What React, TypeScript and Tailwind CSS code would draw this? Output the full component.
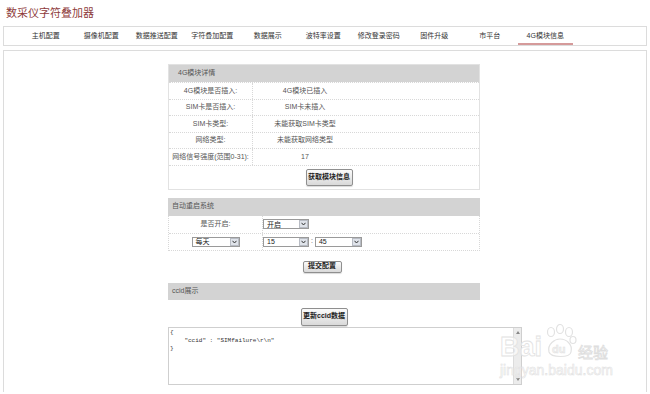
import React from "react";

const font = "font-['Liberation_Sans','Noto_Sans_CJK_SC',sans-serif]";

function Sel({ w, v }: { w: string; v: string }) {
  return (
    <div className={`${w} h-[10px] border border-[#9a9a9a] bg-white flex items-center justify-between`}>
      <span className="pl-[3px] text-[7px] leading-none text-[#222]">{v}</span>
      <span className="w-[9px] h-[8px] bg-[#dfe3ea] border border-[#b8bcc4] flex items-center justify-center">
        <svg width="5" height="4" viewBox="0 0 5 4"><path d="M0.5 0.8 L2.5 3 L4.5 0.8" stroke="#333" strokeWidth="1" fill="none" /></svg>
      </span>
    </div>
  );
}

function Btn({ children, cls }: { children: React.ReactNode; cls: string }) {
  return (
    <div className={`${cls} border border-[#8f8f8f] rounded-[2px] bg-gradient-to-b from-[#fbfbfb] to-[#d9d9d9] flex items-center justify-center text-[7px] font-bold text-[#222] shadow-[0_1px_1px_rgba(0,0,0,0.15)]`}>
      {children}
    </div>
  );
}

export default function App() {
  const nav = ["主机配置", "摄像机配置", "数据推送配置", "字符叠加配置", "数据展示", "波特率设置", "修改登录密码", "固件升级", "市平台", "4G模块信息"];
  const rows: [string, string][] = [
    ["4G模块是否插入:", "4G模块已插入"],
    ["SIM卡是否插入:", "SIM卡未插入"],
    ["SIM卡类型:", "未能获取SIM卡类型"],
    ["网络类型:", "未能获取网络类型"],
    ["网络信号强度(范围0-31):", "17"],
  ];
  return (
    <div className={`w-[650px] h-[394px] overflow-hidden bg-white relative ${font} text-[#555]`}>
      <div className="h-[26px] pl-[6px] pt-[5px] text-[11px] leading-[15px] text-[#8e3b3b] font-['Noto_Sans_CJK_SC',serif]">
        数采仪字符叠加器
      </div>
      <div className="mx-[3px] h-[20px] border border-[#dcdcdc] flex pl-[14px]">
        {nav.map((n, i) => (
          <div key={n} className={`w-[55.5px] flex items-center justify-center text-[7px] ${i === 9 ? "border-b-[2px] border-[#d59a9a] pt-[2px]" : ""} text-[#333]`}>
            {n}
          </div>
        ))}
      </div>
      <div className="mx-[3px] mt-[4px] h-[342px] border border-b-0 border-[#dcdcdc] pt-[13px] pl-[164px]">
        {/* Panel 1 */}
        <div className="w-[312px] border border-[#e2e2e2]">
          <div className="h-[17px] bg-[#d3d3d3] pl-[9px] flex items-center text-[7px] text-[#555]">4G模块详情</div>
          {rows.map(([k, v]) => (
            <div key={k} className="h-[16.5px] flex border-t border-dotted border-[#d8d8d8] text-[7px]">
              <div className="w-[84px] border-r border-dotted border-[#d8d8d8] flex items-center justify-center">{k}</div>
              <div className="w-[104px] flex items-center justify-center">{v}</div>
            </div>
          ))}
          <div className="h-[24px] border-t border-dotted border-[#d8d8d8] flex items-center justify-center pl-[10px]">
            <Btn cls="w-[47px] h-[17px]">获取模块信息</Btn>
          </div>
        </div>
        {/* Panel 2 */}
        <div className="w-[312px] mt-[8px]">
          <div className="h-[18px] bg-[#d3d3d3] pl-[4px] flex items-center text-[7px]">自动重启系统</div>
          <div className="border border-t-0 border-dotted border-[#d8d8d8]">
            <div className="h-[17px] flex text-[7px]">
              <div className="w-[94px] border-r border-dotted border-[#d8d8d8] flex items-center justify-center">是否开启:</div>
              <div className="flex items-center"><Sel w="w-[46px]" v="开启" /></div>
            </div>
            <div className="h-[17px] flex border-t border-dotted border-[#d8d8d8] text-[7px]">
              <div className="w-[94px] border-r border-dotted border-[#d8d8d8] flex items-center justify-center"><Sel w="w-[48px]" v="每天" /></div>
              <div className="flex items-center">
                <Sel w="w-[46px]" v="15" />
                <span className="px-[2px] text-[7px]">:</span>
                <Sel w="w-[47px]" v="45" />
              </div>
            </div>
          </div>
          <div className="h-[32px] flex items-center justify-center pr-[4px]">
            <Btn cls="w-[39px] h-[12px]">提交配置</Btn>
          </div>
        </div>
        {/* Panel 3 */}
        <div className="w-[312px]">
          <div className="h-[17px] bg-[#d3d3d3] pl-[4px] flex items-center text-[7px]">ccid展示</div>
          <div className="h-[26px] flex items-end justify-center">
            <Btn cls="w-[47px] h-[18px]">更新ccid数据</Btn>
          </div>
        </div>
        <div className="w-[354px] h-[58px] mt-[1px] border border-[#cfcfcf] flex">
          <div className="flex-1 pl-[1px] pt-[1px] font-['Liberation_Mono',monospace] text-[6px] leading-[8px] text-[#333] whitespace-pre">
            {"{\n    \"ccid\" : \"SIMfailure\\r\\n\"\n}"}
          </div>
          <div className="w-[8px] bg-[#ececec] border-l border-[#dcdcdc] flex flex-col justify-between items-center py-[3px]">
            <svg width="4" height="3" viewBox="0 0 4 3"><path d="M0 3 L2 0 L4 3 Z" fill="#888" /></svg>
            <svg width="4" height="3" viewBox="0 0 4 3"><path d="M0 0 L2 3 L4 0 Z" fill="#888" /></svg>
          </div>
        </div>
      </div>
      {/* watermark */}
      <div className="absolute left-[500px] top-[324px] pointer-events-none flex flex-col whitespace-nowrap">
        <div className="flex items-end gap-[1px]">
          <span className="text-[27px] font-bold leading-none text-white/60 [-webkit-text-stroke:0.8px_#e2e2e2] font-['Liberation_Sans',sans-serif]">Bai</span>
          <svg width="34" height="36" viewBox="0 0 34 36" className="mb-[1px]">
            <g fill="none" stroke="#e2e2e2" strokeWidth="1.2">
              <ellipse cx="8" cy="8" rx="3.5" ry="4.5" />
              <ellipse cx="17" cy="5" rx="3.5" ry="4.5" />
              <ellipse cx="26" cy="8" rx="3.5" ry="4.5" />
              <ellipse cx="30" cy="16" rx="3" ry="3.5" />
              <path d="M6 28 C4 20 12 15 17 15 C23 15 30 20 28 28 C27 34 8 34 6 28 Z" />
              <text x="9" y="29" fontSize="11" fontWeight="bold" fill="#f2f2f2" stroke="#e2e2e2" strokeWidth="0.5" fontFamily="Liberation Sans, sans-serif">du</text>
            </g>
          </svg>
          <span className="mb-[2px] text-[15px] leading-none text-white/60 [-webkit-text-stroke:0.8px_#dedede] font-['Noto_Sans_CJK_SC',sans-serif]">经验</span>
        </div>
        <span className="mt-[2px] text-[14px] leading-none text-white/60 [-webkit-text-stroke:0.6px_#e2e2e2] font-['Liberation_Sans',sans-serif]">jingyan.baidu.com</span>
      </div>
    </div>
  );
}
